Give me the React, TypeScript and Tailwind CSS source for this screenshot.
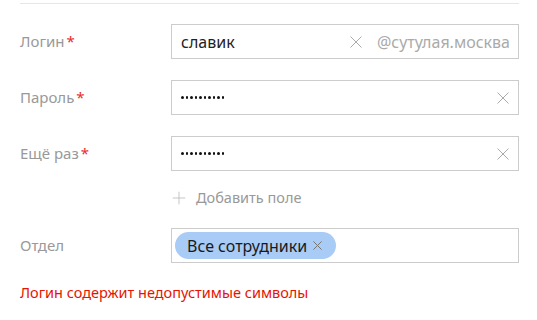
import { Plus } from "lucide-react";

const FONT = { fontFamily: '"Noto Sans", "Open Sans", sans-serif' };

function Label({ text, required }: { text: string; required?: boolean }) {
  return (
    <div className="w-[151px] shrink-0 text-[15px] text-[#999]">
      {text}
      {required && <span className="ml-[2px] text-[#e62e2e]">*</span>}
    </div>
  );
}

// thin clear cross used in the inputs
function Cross({ size = 12, className = "" }: { size?: number; className?: string }) {
  return (
    <svg width={size} height={size} viewBox="0 0 12 12" className={className}>
      <path d="M0.5 0.5L11.5 11.5M11.5 0.5L0.5 11.5" stroke="currentColor" strokeWidth={12 / size} fill="none" />
    </svg>
  );
}

function Dots() {
  return (
    <div className="flex flex-1 items-center gap-[2px]">
      {Array.from({ length: 10 }).map((_, i) => (
        <span key={i} className="h-[2.5px] w-[2.5px] rounded-full bg-[#111]" />
      ))}
    </div>
  );
}

function PasswordField() {
  return (
    <div className="flex h-[35px] flex-1 items-center border border-[#ccc] pl-[9px] pr-[9px]">
      <Dots />
      <Cross className="text-[#aaa]" />
    </div>
  );
}

export default function App() {
  return (
    <div className="h-[320px] w-[537px] bg-white pl-5 pr-[18px]" style={FONT}>
      <div className="mt-[3px] border-t border-[#e6e6e6] pt-[20px]">
        <div className="flex items-center">
          <Label text="Логин" required />
          <div className="flex h-[35px] flex-1 items-center border border-[#ccc] pl-[9px] pr-[8px]">
            <span className="flex-1 text-[16px] text-[#222]">славик</span>
            <Cross className="text-[#aaa]" />
            <span className="ml-[15px] text-[16px] text-[#aaa]">@сутулая.москва</span>
          </div>
        </div>

        <div className="mt-[21px] flex items-center">
          <Label text="Пароль" required />
          <PasswordField />
        </div>

        <div className="mt-[21px] flex items-center">
          <Label text="Ещё раз" required />
          <PasswordField />
        </div>

        <div className="flex h-[57px] items-center pb-[3px] pl-[149px]">
          <div className="flex items-center gap-[7px] text-[14.5px] text-[#999]">
            <Plus className="h-[20px] w-[20px] text-[#bbb]" strokeWidth={1} />
            <span>Добавить поле</span>
          </div>
        </div>

        <div className="flex items-center">
          <Label text="Отдел" />
          <div className="flex h-[35px] flex-1 items-center border border-[#ccc] pl-[3px]">
            <div className="flex h-[27px] items-center gap-[6px] rounded-full bg-[#a8ccf5] pl-[12px] pr-[14px]">
              <span className="text-[16px] text-[#1a1a1a]">Все сотрудники</span>
              <Cross size={9} className="text-[#777]" />
            </div>
          </div>
        </div>

        <div className="mt-[19px] text-[14.5px] text-[#e61400]">
          Логин содержит недопустимые символы
        </div>
      </div>
    </div>
  );
}
